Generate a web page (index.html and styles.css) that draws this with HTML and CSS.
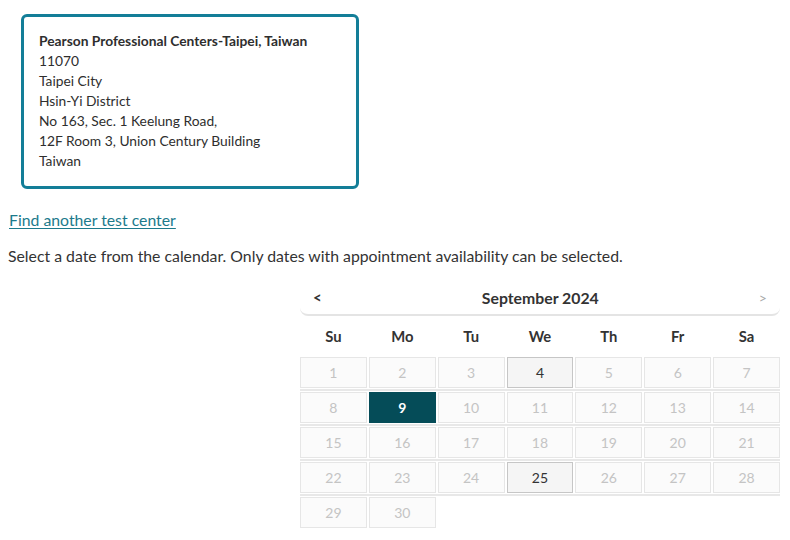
FILE: index.html
```html
<!DOCTYPE html>
<html>
<head>
<meta charset="utf-8">
<link rel="stylesheet" href="styles.css">
</head>
<body>
<div class="center-box">
  <div class="center-name">Pearson Professional Centers-Taipei, Taiwan</div>
  <div>11070</div>
  <div>Taipei City</div>
  <div>Hsin-Yi District</div>
  <div>No 163, Sec. 1 Keelung Road,</div>
  <div>12F Room 3, Union Century Building</div>
  <div>Taiwan</div>
</div>
<a class="find-link" href="#">Find another test center</a>
<p class="instructions">Select a date from the calendar. Only dates with appointment availability can be selected.</p>
<div class="calendar">
  <div class="cal-head">
    <span class="nav prev">&lt;</span>
    <span class="month">September 2024</span>
    <span class="nav next">&gt;</span>
  </div>
  <div class="week dow">
    <div>Su</div><div>Mo</div><div>Tu</div><div>We</div><div>Th</div><div>Fr</div><div>Sa</div>
  </div>
  <div class="week days">
    <div class="day off">1</div><div class="day off">2</div><div class="day off">3</div><div class="day avail">4</div><div class="day off">5</div><div class="day off">6</div><div class="day off">7</div>
  </div>
  <div class="week days">
    <div class="day off">8</div><div class="day sel">9</div><div class="day off">10</div><div class="day off">11</div><div class="day off">12</div><div class="day off">13</div><div class="day off">14</div>
  </div>
  <div class="week days">
    <div class="day off">15</div><div class="day off">16</div><div class="day off">17</div><div class="day off">18</div><div class="day off">19</div><div class="day off">20</div><div class="day off">21</div>
  </div>
  <div class="week days">
    <div class="day off">22</div><div class="day off">23</div><div class="day off">24</div><div class="day avail">25</div><div class="day off">26</div><div class="day off">27</div><div class="day off">28</div>
  </div>
  <div class="week days last">
    <div class="day off">29</div><div class="day off">30</div>
  </div>
</div>
</body>
</html>
```
FILE: styles.css
```css
* { box-sizing: border-box; }
body {
  margin: 8px;
  font-family: Lato, "Open Sans", sans-serif;
  color: #333;
  background: #fff;
}
.center-box {
  margin: 6px 0 0 13px;
  width: 338px;
  border: 3px solid #137e98;
  border-radius: 6px;
  padding: 14px 15px 15px;
  font-size: 13.8px;
  line-height: 20px;
  color: #2e2e2e;
}
.center-name { font-weight: 700; }
.find-link {
  display: inline-block;
  margin: 21px 0 0 1px;
  font-size: 15.8px;
  line-height: 20px;
  color: #1c7a8c;
  text-decoration: underline;
  text-underline-offset: 2px;
}
.instructions {
  margin: 16px 0 0;
  font-size: 15.8px;
  line-height: 20px;
  color: #333;
}
.calendar {
  margin: 18px 0 0 292px;
  width: 480px;
}
.cal-head {
  display: flex;
  align-items: center;
  justify-content: space-between;
  height: 32px;
  padding: 0 13px 4px;
  border-bottom: 2px solid #e4e4e4;
  border-radius: 0 0 8px 8px;
}
.month { font-weight: 700; font-size: 15.8px; color: #333; }
.nav { font-size: 15px; font-weight: 700; color: #333; }
.nav.next { color: #aaa; font-weight: 400; font-size: 14px; }
.week {
  display: grid;
  grid-template-columns: repeat(7, 1fr);
  column-gap: 2px;
}
.dow {
  height: 40px;
  align-items: center;
  text-align: center;
  font-weight: 700;
  font-size: 14.8px;
  color: #333;
}
.days {
  padding: 1px 0;
  border-bottom: 2px solid #e8e8e8;
}
.days.last { border-bottom: none; }
.day {
  height: 31px;
  display: flex;
  align-items: center;
  justify-content: center;
  font-size: 14px;
}
.day.off {
  background: #fbfbfb;
  border: 1px solid #e6e6e6;
  color: #c4c4c4;
}
.day.avail {
  background: #f5f5f5;
  border: 1px solid #c6c6c6;
  color: #333;
}
.day.sel {
  background: #054c58;
  border: 1px solid #054c58;
  color: #fff;
  font-weight: 700;
}
```
